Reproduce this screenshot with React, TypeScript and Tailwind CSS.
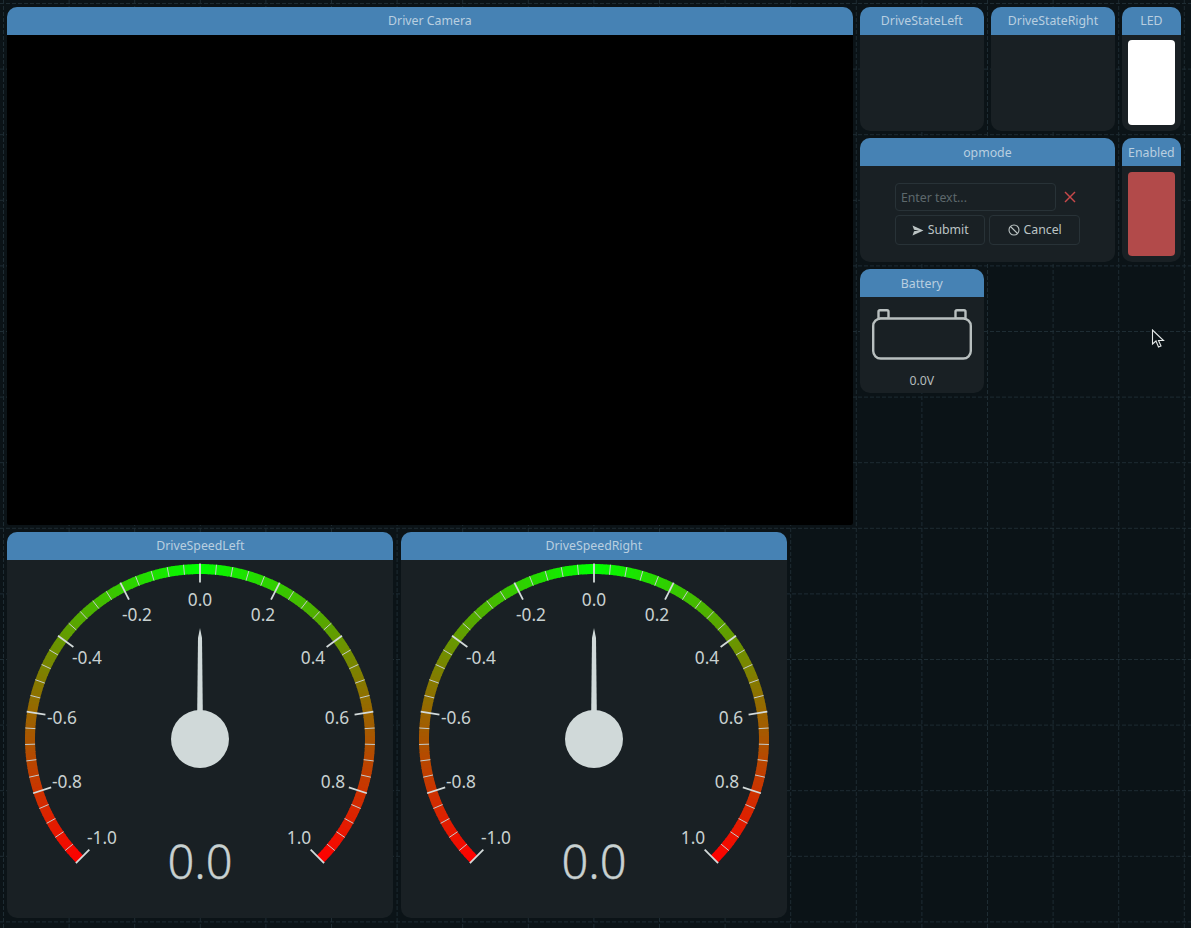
import React from "react";

const CELL = 65.6;
const COLS = Array.from({ length: 19 }, (_, i) => 3.5 + i * CELL);
const ROWS = Array.from({ length: 15 }, (_, i) => 3.5 + i * CELL);

function GridLines() {
  return (
    <svg className="absolute inset-0 w-full h-full" width="1191" height="928">
      {COLS.map((x) => (
        <line key={x} x1={x} x2={x} y1={0} y2={928} stroke="#1e2c33" strokeWidth="1" strokeDasharray="4 2" />
      ))}
      {ROWS.map((y) => (
        <line key={y} y1={y} y2={y} x1={0} x2={1191} stroke="#1e2c33" strokeWidth="1" strokeDasharray="4 2" />
      ))}
    </svg>
  );
}

function Card({ title, className, children, bodyClass }: { title: string; className: string; children?: React.ReactNode; bodyClass?: string }) {
  return (
    <div className={`m-[3.6px] flex flex-col rounded-[10px] overflow-hidden bg-[#192024] ${className}`}>
      <div className="h-[28px] shrink-0 bg-[#4682b4] flex items-center justify-center pt-[1px] text-[12.3px] text-[#b9cfe0] whitespace-nowrap">{title}</div>
      <div className={`flex-1 min-h-0 ${bodyClass ?? ""}`}>{children}</div>
    </div>
  );
}

const OX = 7;
const OY = 560;
const CX = 200 - OX;
const CY = 739 - OY;

function pt(r: number, deg: number) {
  const a = (deg * Math.PI) / 180;
  return [CX + r * Math.sin(a), CY - r * Math.cos(a)];
}

const LABELS: [string, number, number][] = [
  ["-1.0", 102, 838],
  ["-0.8", 67, 782],
  ["-0.6", 62, 718],
  ["-0.4", 87, 657.5],
  ["-0.2", 137, 615],
  ["0.0", 200, 600],
  ["0.2", 263, 615],
  ["0.4", 313, 657.5],
  ["0.6", 337, 718],
  ["0.8", 333, 782],
  ["1.0", 299, 838],
];

function Gauge() {
  const segs = [];
  const N = 200;
  for (let i = 0; i < N; i++) {
    const v0 = -1 + (2 * i) / N;
    const v1 = -1 + (2 * (i + 1)) / N + 0.002;
    const t = Math.abs((v0 + v1) / 2);
    const col = `rgb(${Math.round(255 * t)},${Math.round(255 * (1 - t))},0)`;
    const [x0, y0] = pt(170, v0 * 135);
    const [x1, y1] = pt(170, Math.min(v1, 1) * 135);
    segs.push(<path key={i} d={`M${x0} ${y0}L${x1} ${y1}`} stroke={col} strokeWidth="10" fill="none" />);
  }
  const ticks = [];
  for (let i = 0; i <= 50; i++) {
    const deg = -135 + i * 5.4;
    const major = i % 5 === 0;
    const [x0, y0] = pt(major ? 175.5 : 175, deg);
    const [x1, y1] = pt(major ? 156.5 : 165, deg);
    ticks.push(
      <line key={i} x1={x0} y1={y0} x2={x1} y2={y1} stroke={major ? "#d3dada" : "#c4cccc"} strokeWidth={major ? 1.8 : 1} />
    );
  }
  return (
    <svg width="386" height="358" viewBox="0 0 386 358" className="block" fontFamily="'Noto Sans', sans-serif">
      {segs}
      {ticks}
      {LABELS.map(([s, x, y]) => (
        <text key={s} x={x - OX} y={y - OY + 6} textAnchor="middle" fontSize="17.3" fill="#c8d1d1">
          {s}
        </text>
      ))}
      <polygon points={`${CX},${68} ${CX + 2},${78} ${CX + 2.8},${152} ${CX - 2.8},${152} ${CX - 2},${78}`} fill="#d0d9d9" />
      <circle cx={CX} cy={CY} r="29" fill="#d0d9d9" />
      <text x={CX} y={319} textAnchor="middle" fontSize="47" fontWeight="300" fill="#c8d1d1" stroke="#c8d1d1" strokeWidth="0.4">
        0.0
      </text>
    </svg>
  );
}

function SendIcon() {
  return (
    <svg width="12" height="11" viewBox="0 0 12 11">
      <path d="M0.5 0.5 L11.5 5.5 L0.5 10.5 L2 6.3 L7 5.5 L2 4.7 Z" fill="#bcc4c4" />
    </svg>
  );
}

function BanIcon() {
  return (
    <svg width="12" height="12" viewBox="0 0 12 12" fill="none" stroke="#bcc4c4" strokeWidth="1.1">
      <circle cx="6" cy="6" r="5" />
      <line x1="2.5" y1="2.5" x2="9.5" y2="9.5" />
    </svg>
  );
}

function XIcon() {
  return (
    <svg width="12" height="12" viewBox="0 0 12 12" stroke="#c8484a" strokeWidth="1.4" fill="none">
      <line x1="1" y1="1" x2="11" y2="11" />
      <line x1="11" y1="1" x2="1" y2="11" />
    </svg>
  );
}

function BatteryIcon() {
  return (
    <svg width="100" height="51" viewBox="0 0 100 51" fill="none" stroke="#b8bfbf" strokeWidth="2.4">
      <rect x="6.5" y="1.2" width="10" height="8.5" rx="1.5" />
      <rect x="83.5" y="1.2" width="10" height="8.5" rx="1.5" />
      <rect x="1.2" y="9.5" width="97.6" height="40" rx="7.5" fill="#192024" />
    </svg>
  );
}

function Cursor() {
  return (
    <svg className="absolute left-[1151px] top-[329px]" width="14" height="20" viewBox="0 0 14 20">
      <path d="M1.5 1 L1.5 15 L5 12 L7.5 18 L10 17 L7.5 11.5 L12.5 11.5 Z" fill="#0b1317" stroke="#e4e8e8" strokeWidth="1.1" />
    </svg>
  );
}

export default function App() {
  return (
    <div
      className="relative w-[1191px] h-[928px] overflow-hidden bg-[#0b1317] text-[#bcc4c4]"
      style={{ fontFamily: "'Noto Sans', sans-serif" }}
    >
      <GridLines />
      <div className="relative grid grid-cols-[repeat(18,65.6px)] grid-rows-[repeat(14,65.6px)] pl-[3.5px] pt-[3.5px]">
        <Card title="Driver Camera" className="col-span-13 row-span-8 rounded-b-[2px]" bodyClass="bg-black" />
        <Card title="DriveStateLeft" className="col-span-2 row-span-2" />
        <Card title="DriveStateRight" className="col-span-2 row-span-2" />
        <Card title="LED" className="col-span-1 row-span-2" bodyClass="pt-[5px] px-[6px] pb-[6px]">
          <div className="h-full rounded-[4px] bg-white" />
        </Card>
        <Card title="opmode" className="col-start-14 col-span-4 row-start-3 row-span-2" bodyClass="flex flex-col items-center justify-center">
          <div className="flex flex-col gap-[4px] w-[185px]">
            <div className="flex items-center gap-[8px]">
              <div className="w-[161px] h-[28px] rounded-[4px] border border-[#283237] flex items-center px-[5px] pt-[1px] text-[12.3px] text-[#5d686c]">
                Enter text...
              </div>
              <XIcon />
            </div>
            <div className="flex gap-[4px]">
              <div className="w-[91px] h-[30px] rounded-[4px] border border-[#283237] flex items-center justify-center gap-[4px] text-[12.3px]">
                <SendIcon />
                Submit
              </div>
              <div className="w-[91px] h-[30px] rounded-[4px] border border-[#283237] flex items-center justify-center gap-[4px] text-[12.3px]">
                <BanIcon />
                Cancel
              </div>
            </div>
          </div>
        </Card>
        <Card title="Enabled" className="col-start-18 col-span-1 row-start-3 row-span-2" bodyClass="pt-[5.5px] px-[6px] pb-[6px]">
          <div className="h-full rounded-[4px] bg-[#b24a4a]" />
        </Card>
        <Card title="Battery" className="col-start-14 col-span-2 row-start-5 row-span-2" bodyClass="flex flex-col items-center pt-[12px]">
          <BatteryIcon />
          <div className="mt-[12px] text-[12.3px] text-[#b4bcbc]">0.0V</div>
        </Card>
        <Card title="DriveSpeedLeft" className="col-start-1 col-span-6 row-start-9 row-span-6">
          <Gauge />
        </Card>
        <Card title="DriveSpeedRight" className="col-start-7 col-span-6 row-start-9 row-span-6">
          <Gauge />
        </Card>
      </div>
      <Cursor />
    </div>
  );
}
